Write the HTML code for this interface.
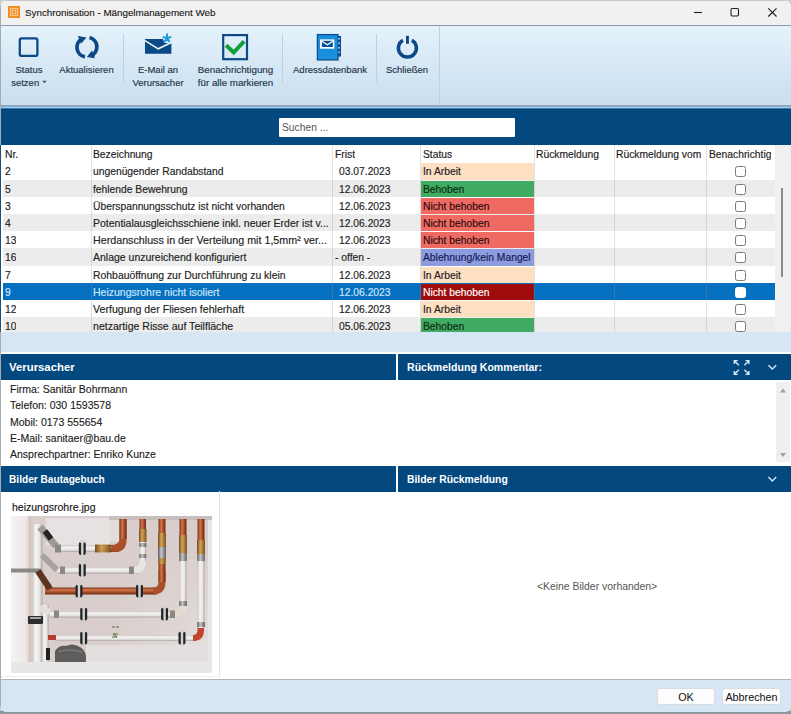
<!DOCTYPE html>
<html><head><meta charset="utf-8">
<style>
*{box-sizing:border-box;margin:0;padding:0}
html,body{width:791px;height:714px;overflow:hidden;background:#c9cbcd}
body{font-family:"Liberation Sans",sans-serif;position:relative;color:#222}
.a{position:absolute}
#win{left:0;top:0;width:791px;height:712px;background:#fff;border-radius:7px 7px 7px 7px;overflow:hidden}
#bl{left:0;top:0;width:1px;height:712px;background:#a3abb3}
#bt{left:0;top:0;width:791px;height:1px;background:#c4c6c8}
#title{left:0;top:0;width:791px;height:26px;background:#f2f1f0;border-bottom:1px solid #8c9aa8}
#title .t{left:25px;top:7px;font-size:9.8px;color:#111;-webkit-text-stroke:0.1px currentColor;white-space:nowrap}
#tb{left:0;top:26px;width:791px;height:79px;background:linear-gradient(#e4f2fb,#c9deef)}
.sep{width:1px;background:#bfd0df}
.lbl{font-size:9.5px;color:#23344a;-webkit-text-stroke:0.15px currentColor;text-align:center;white-space:nowrap;line-height:12.5px}
#band1{left:0;top:105px;width:791px;height:2px;background:#8fa7be}
#band2{left:0;top:107px;width:791px;height:3px;background:linear-gradient(#a2d2e8 0,#a2d2e8 33%,#2a84c2 33%,#2a84c2 66%,#083d6c 66%)}
#sbar{left:0;top:108px;width:791px;height:37px;background:#03487f}
#search{left:279px;top:118px;width:236px;height:19px;background:#fff;border-radius:1px}
#search span{position:absolute;left:3px;top:4px;font-size:10.3px;color:#555}
#tbl{left:0;top:145px;width:775px;height:187px;background:#fff;border-left:1px solid #0d4f86}
.row{position:absolute;left:3px;width:772px;height:17px;font-size:10.3px;white-space:nowrap;-webkit-text-stroke:0.15px currentColor}
.row.g{background:#ececec}
.row.sel{background:#0570bf;color:#cfe8ff}
.c{position:absolute;top:1px;height:17px;line-height:17px;overflow:hidden}
.vl{position:absolute;top:145px;width:1px;height:187px;background:rgba(150,150,150,0.28)}
.st{position:absolute;top:1px;height:16px;line-height:17.5px;left:418px;width:113px;padding-left:2px}
.cb{position:absolute;left:732px;top:3.5px;width:11px;height:11px;border:1.2px solid #7a7a7a;border-radius:2.5px;background:#fff}
#vscroll{left:775px;top:145px;width:16px;height:187px;background:#f0f0f0}
#thumb{left:781px;top:188px;width:2px;height:89px;background:#8a8a8a}
#band3{left:0;top:332px;width:791px;height:20px;background:#d6e6f4}
.ph{height:26px;background:#03487f;color:#fff;font-weight:bold;font-size:10.5px;line-height:26px;padding-left:9px;white-space:nowrap}
.info{left:10px;font-size:10.5px;color:#1a1a1a;white-space:nowrap;-webkit-text-stroke:0.12px currentColor}
#foot{left:0;top:679px;width:791px;height:33px;background:#d6e6f4;border-top:1px solid #b5b5b5}
.btn{position:absolute;top:688px;height:17px;background:#fdfdfd;border:1px solid #d9dde1;border-radius:3px;font-size:10.8px;text-align:center;line-height:16px;color:#111}
.st.arb{background:#fde0c2;color:#222}
.st.beh{background:#40ab62;color:#0d2a12}
.st.nb{background:#ef6a63;color:#2a0b0b}
.st.abl{background:#8e9bdf;color:#121a55}
.st.sel{background:#a00b0b;color:#fff}
.row.sel .cb{border-color:#fff}
</style></head><body>
<div class="a" style="left:0;top:711px;width:791px;height:3px;background:#8f989f"></div>
<div id="win" class="a">
  <div id="title" class="a">
    <svg class="a" style="left:8px;top:6px" width="12" height="12" viewBox="0 0 13 13"><rect x="0" y="0" width="13" height="13" fill="#f08a1c"/><rect x="2.5" y="2.5" width="8" height="8" fill="none" stroke="#ffd7a8" stroke-width="1"/><rect x="4.5" y="4.5" width="4" height="4" fill="none" stroke="#ffd7a8" stroke-width="1"/></svg>
    <div class="a t">Synchronisation - Mängelmanagement Web</div>
    <svg class="a" style="left:0;top:0" width="791" height="25" viewBox="0 0 791 25"><line x1="694" y1="12.5" x2="702" y2="12.5" stroke="#222" stroke-width="1.1"/><rect x="731" y="8.5" width="7.5" height="7.5" rx="1.2" fill="none" stroke="#222" stroke-width="1.1"/><path d="M768.3 8.3L776.5 16.5M776.5 8.3L768.3 16.5" stroke="#222" stroke-width="1.1"/></svg>
    
    
  </div>
  <div id="tb" class="a">
    <svg class="a" style="left:0;top:-1px" width="791" height="80" viewBox="0 25 791 80">
      <g fill="none" stroke="#0b4a85">
        <rect x="19.8" y="38.3" width="17.6" height="17.6" rx="2" stroke-width="2.3"/>
        <path d="M82.5 38.6 A9.7 9.7 0 0 0 84.9 56.9" stroke-width="3.8"/>
        <path d="M89.5 37.5 A9.7 9.7 0 0 1 90.8 55.9" stroke-width="3.8"/>
        <rect x="223.2" y="35.1" width="23.8" height="24.1" stroke-width="2.2"/>
        <path d="M402.9 40.2 A9 9 0 1 0 411.9 40.2" stroke-width="3.5"/>
      </g>
      <path d="M77.8 36 L86.6 37.4 L81 43.8Z" fill="#0b4a85"/>
      <path d="M86.8 57 L95 58.3 L92 50.4Z" fill="#0b4a85"/>
      <rect x="406" y="35.8" width="2.9" height="8" fill="#0b4a85"/>
      <!-- envelope -->
      <path d="M145 38.9 H163 L164.5 42.9 H171.4 V53.8 H145Z" fill="#0b4a85"/>
      <path d="M145 40.6 L158.2 48.8 L171.4 42.5" fill="none" stroke="#eef6fc" stroke-width="1.5"/>
      <g stroke="#1a9ad8" stroke-width="2" stroke-linecap="butt">
        <path d="M167 38.3 V33.6 M167 38.3 L171.3 36.9 M167 38.3 L162.7 36.9 M167 38.3 L169.7 42 M167 38.3 L164.3 42"/>
      </g>
      <path d="M226.1 45.2 L233.7 52.4 L244.1 41.4" fill="none" stroke="#13a03a" stroke-width="4" stroke-linejoin="miter"/>
      <!-- address book -->
      <rect x="317.4" y="34.6" width="20.6" height="25.3" fill="#1a8fdc" stroke="#0a4f8f" stroke-width="1.3"/>
      <rect x="338" y="36" width="3" height="20.6" fill="#0a4f8f"/>
      <g fill="#fff"><rect x="338.4" y="38" width="1.2" height="1.6"/><rect x="338.4" y="42.5" width="1.2" height="1.6"/><rect x="338.4" y="47" width="1.2" height="1.6"/><rect x="338.4" y="51.5" width="1.2" height="1.6"/></g>
      <rect x="320.1" y="39.4" width="14.2" height="9.3" fill="#fff"/>
      <rect x="321.9" y="40.8" width="10.9" height="6.2" fill="#0a4f8f"/>
      <path d="M321.9 41.2 L327.3 44.8 L332.8 41.2" fill="none" stroke="#fff" stroke-width="1.1"/>
    </svg>
    <div class="a lbl" style="left:4px;top:38px;width:50px">Status<br>setzen <svg width="5" height="4" style="vertical-align:2px"><path d="M0.3 0.8H4.7L2.5 3.3Z" fill="#3f4e60"/></svg></div>
    <div class="a lbl" style="left:56px;top:38px;width:61px">Aktualisieren</div>
    <div class="a sep" style="left:123px;top:8px;height:49px"></div>
    <div class="a lbl" style="left:128px;top:38px;width:60px">E-Mail an<br>Verursacher</div>
    <div class="a lbl" style="left:190px;top:38px;width:91px;font-size:9.75px">Benachrichtigung<br>für alle markieren</div>
    <div class="a sep" style="left:282px;top:8px;height:49px"></div>
    <div class="a lbl" style="left:290px;top:38px;width:80px">Adressdatenbank</div>
    <div class="a sep" style="left:376px;top:8px;height:49px"></div>
    <div class="a lbl" style="left:382px;top:38px;width:50px">Schließen</div>
    <div class="a sep" style="left:439px;top:0px;height:79px"></div>
  </div>
  <div id="band1" class="a"></div>
  <div id="sbar" class="a"></div>
  <div id="band2" class="a"></div>
  <div id="search" class="a"><span>Suchen ...</span></div>

  <div id="tbl" class="a"></div>
  <div id="rows">
<div class="row" style="top:145px;height:17px"><div class="c" style="left:2px">Nr.</div><div class="c" style="left:90px">Bezeichnung</div><div class="c" style="left:332px">Frist</div><div class="c" style="left:420px">Status</div><div class="c" style="left:533px">Rückmeldung</div><div class="c" style="left:613px">Rückmeldung vom</div><div class="c" style="left:706px">Benachrichtig</div></div>
<div class="row" style="top:162px;height:18px"><div class="c" style="left:2px">2</div><div class="c" style="left:90px;width:238px">ungenügender Randabstand</div><div class="c" style="left:336px">03.07.2023</div><div class="st arb" style="height:17px">In Arbeit</div><div class="cb"></div></div>
<div class="row g" style="top:180px;height:17px"><div class="c" style="left:2px">5</div><div class="c" style="left:90px;width:238px">fehlende Bewehrung</div><div class="c" style="left:336px">12.06.2023</div><div class="st beh" style="height:16px">Behoben</div><div class="cb"></div></div>
<div class="row" style="top:197px;height:17px"><div class="c" style="left:2px">3</div><div class="c" style="left:90px;width:238px">Überspannungsschutz ist nicht vorhanden</div><div class="c" style="left:336px">12.06.2023</div><div class="st nb" style="height:16px">Nicht behoben</div><div class="cb"></div></div>
<div class="row g" style="top:214px;height:17px"><div class="c" style="left:2px">4</div><div class="c" style="left:90px;width:245px"><span style="display:inline-block;transform:scaleX(1.0177);transform-origin:0 50%">Potentialausgleichsschiene inkl. neuer Erder ist v...</span></div><div class="c" style="left:336px">12.06.2023</div><div class="st nb" style="height:16px">Nicht behoben</div><div class="cb"></div></div>
<div class="row" style="top:231px;height:17px"><div class="c" style="left:2px">13</div><div class="c" style="left:90px;width:245px"><span style="display:inline-block;transform:scaleX(1.04);transform-origin:0 50%">Herdanschluss in der Verteilung mit 1,5mm² ver...</span></div><div class="c" style="left:336px">12.06.2023</div><div class="st nb" style="height:16px">Nicht behoben</div><div class="cb"></div></div>
<div class="row g" style="top:248px;height:18px"><div class="c" style="left:2px">16</div><div class="c" style="left:90px;width:245px"><span style="display:inline-block;transform:scaleX(1.0186);transform-origin:0 50%">Anlage unzureichend konfiguriert</span></div><div class="c" style="left:332px">- offen -</div><div class="st abl" style="height:17px">Ablehnung/kein Mangel</div><div class="cb"></div></div>
<div class="row" style="top:266px;height:17px"><div class="c" style="left:2px">7</div><div class="c" style="left:90px;width:245px"><span style="display:inline-block;transform:scaleX(1.011);transform-origin:0 50%">Rohbauöffnung zur Durchführung zu klein</span></div><div class="c" style="left:336px">12.06.2023</div><div class="st arb" style="height:16px">In Arbeit</div><div class="cb"></div></div>
<div class="row sel" style="top:283px;height:17px"><div class="c" style="left:2px">9</div><div class="c" style="left:90px;width:245px"><span style="display:inline-block;transform:scaleX(1.0185);transform-origin:0 50%">Heizungsrohre nicht isoliert</span></div><div class="c" style="left:336px">12.06.2023</div><div class="st sel" style="height:16px">Nicht behoben</div><div class="cb"></div></div>
<div class="row" style="top:300px;height:17px"><div class="c" style="left:2px">12</div><div class="c" style="left:90px;width:245px"><span style="display:inline-block;transform:scaleX(1.031);transform-origin:0 50%">Verfugung der Fliesen fehlerhaft</span></div><div class="c" style="left:336px">12.06.2023</div><div class="st arb" style="height:16px">In Arbeit</div><div class="cb"></div></div>
<div class="row g" style="top:317px;height:15px"><div class="c" style="left:2px">10</div><div class="c" style="left:90px;width:245px"><span style="display:inline-block;transform:scaleX(1.026);transform-origin:0 50%">netzartige Risse auf Teilfläche</span></div><div class="c" style="left:336px">05.06.2023</div><div class="st beh" style="height:14px">Behoben</div><div class="cb"></div></div>
</div><!--/rows-->
  <div class="vl" style="left:91px"></div>
  <div class="vl" style="left:332px"></div>
  <div class="vl" style="left:420px"></div>
  <div class="vl" style="left:534px"></div>
  <div class="vl" style="left:614px"></div>
  <div class="vl" style="left:706px"></div>

  <div id="vscroll" class="a"></div>
  <div id="thumb" class="a"></div>
  <div id="band3" class="a"></div>
  <div class="a" style="left:0;top:352px;width:791px;height:2px;background:#fff"></div>

  <div class="a ph" style="left:0;top:354px;width:396px"><span style="display:inline-block;transform:scaleX(1.082);transform-origin:0 50%">Verursacher</span></div>
  <div class="a ph" style="left:398px;top:354px;width:393px"><span style="display:inline-block;transform:scaleX(1.006);transform-origin:0 50%">Rückmeldung Kommentar:</span></div>
  <div class="a info" style="top:383px">Firma: Sanitär Bohrmann</div>
  <div class="a info" style="top:399px">Telefon: 030 1593578</div>
  <div class="a info" style="top:416px">Mobil: 0173 555654</div>
  <div class="a info" style="top:432px">E-Mail: sanitaer@bau.de</div>
  <div class="a info" style="top:448px">Ansprechpartner: Enriko Kunze</div>

  <div class="a ph" style="left:0;top:466px;width:396px"><span style="display:inline-block;transform:scaleX(0.965);transform-origin:0 50%">Bilder Bautagebuch</span></div>
  <div class="a ph" style="left:398px;top:466px;width:393px"><span style="display:inline-block;transform:scaleX(0.987);transform-origin:0 50%">Bilder Rückmeldung</span></div>
  <div class="a" style="left:219px;top:491px;width:1px;height:186px;background:#e3e3e3"></div>
  <div class="a" style="left:0;top:676px;width:220px;height:1px;background:#ededed"></div>
  <div class="a" style="left:12px;top:501px;font-size:10.5px;color:#111;white-space:nowrap;-webkit-text-stroke:0.12px currentColor">heizungsrohre.jpg</div>
  <svg class="a" style="left:8px;top:512px" width="210" height="166" viewBox="8 512 210 166">
    <defs>
      <linearGradient id="hw" x1="0" y1="0" x2="0" y2="1"><stop offset="0" stop-color="#c9c5c3"/><stop offset="0.3" stop-color="#f4f3f2"/><stop offset="0.7" stop-color="#e6e4e3"/><stop offset="1" stop-color="#a9a4a1"/></linearGradient>
      <linearGradient id="vw" x1="0" y1="0" x2="1" y2="0"><stop offset="0" stop-color="#c9c5c3"/><stop offset="0.35" stop-color="#f6f5f4"/><stop offset="0.75" stop-color="#e4e2e1"/><stop offset="1" stop-color="#a9a4a1"/></linearGradient>
      <linearGradient id="hc" x1="0" y1="0" x2="0" y2="1"><stop offset="0" stop-color="#7a3219"/><stop offset="0.35" stop-color="#d3774a"/><stop offset="0.65" stop-color="#a9502a"/><stop offset="1" stop-color="#6a2a14"/></linearGradient>
      <linearGradient id="vc" x1="0" y1="0" x2="1" y2="0"><stop offset="0" stop-color="#7a3219"/><stop offset="0.4" stop-color="#d3774a"/><stop offset="0.65" stop-color="#a9502a"/><stop offset="1" stop-color="#6a2a14"/></linearGradient>
      <linearGradient id="vb" x1="0" y1="0" x2="1" y2="0"><stop offset="0" stop-color="#6e4a1c"/><stop offset="0.4" stop-color="#d4a45a"/><stop offset="1" stop-color="#7a5220"/></linearGradient>
      <linearGradient id="vm" x1="0" y1="0" x2="1" y2="0"><stop offset="0" stop-color="#5a5a5a"/><stop offset="0.4" stop-color="#c8c8c8"/><stop offset="1" stop-color="#5e5e5e"/></linearGradient>
      <linearGradient id="wg" x1="0" y1="0" x2="1" y2="1"><stop offset="0" stop-color="#dacfcc" stop-opacity="0"/><stop offset="1" stop-color="#e6e2e1"/></linearGradient>
      <linearGradient id="wl" x1="0" y1="0" x2="1" y2="0"><stop offset="0" stop-color="#f4f2f2"/><stop offset="0.75" stop-color="#ede8e7"/><stop offset="1" stop-color="#cdbbb4"/></linearGradient>
    </defs>
    <rect x="11" y="662" width="201" height="11" fill="#e7e7e7"/>
    <rect x="11" y="516" width="201" height="146" fill="#d9cecb"/>
    <rect x="11" y="516" width="20" height="146" fill="url(#wl)"/>
    <rect x="46" y="518" width="64" height="27" fill="#e7e2e1"/>
    <rect x="110" y="520" width="10" height="22" fill="#e2dcdb"/>
    <rect x="120" y="560" width="92" height="102" fill="url(#wg)"/>
    <rect x="86" y="645" width="126" height="17" fill="#e3dfde"/>
    <rect x="109" y="516" width="103" height="4" fill="#c6bfbc"/>
    <rect x="208" y="520" width="4" height="142" fill="#e9e6e5"/>
    <!-- horizontal pipes -->
    <rect x="55" y="545" width="41" height="7" fill="url(#hw)"/>
    <rect x="95" y="545" width="24" height="7" fill="url(#hc)"/>
    <rect x="95" y="544.5" width="16" height="8" fill="url(#vb)" opacity="0.9"/>
    <rect x="58" y="567" width="80" height="6.5" fill="url(#hw)"/>
    <rect x="45" y="587.5" width="112" height="7" fill="url(#hc)"/>
    <rect x="50" y="611" width="128" height="6.5" fill="url(#hw)"/>
    <rect x="55" y="635" width="141" height="6" fill="url(#hw)"/>
    <!-- elbows -->
    <path d="M119.5 545 H119 Q126.5 545 126.5 537 V540 Q126.5 552 115 552" fill="#a9502a"/>
    <path d="M112 552 Q126.5 552 126.5 538 V519 H119.5 V538 Q119.5 545 112 545Z" fill="#a9502a"/>
    <path d="M134 573.5 Q146 573.5 146 561 V556 H139.5 V561 Q139.5 567 134 567Z" fill="#e9e6e3"/>
    <path d="M153 594.5 Q165.5 594.5 165.5 582 V570 H158.5 V582 Q158.5 587.5 153 587.5Z" fill="#a9502a"/>
    <path d="M175 617.5 Q186.5 617.5 186.5 606 V600 H179.5 V606 Q179.5 611 175 611Z" fill="#e2ddd2"/>
    <path d="M193 641 Q204 641 204 630 V626 H197.5 V630 Q197.5 635 193 635Z" fill="#c2442f"/>
    <!-- vertical pipes -->
    <rect x="119.5" y="519" width="7" height="20" fill="url(#vc)"/>
    <rect x="139.5" y="519" width="6.5" height="12" fill="url(#vc)"/>
    <rect x="139" y="529" width="7.5" height="13" fill="url(#vb)"/>
    <rect x="139.5" y="542" width="6.5" height="19" fill="url(#vw)"/>
    <rect x="139.3" y="543" width="7" height="4" fill="url(#vm)"/>
    <rect x="139.3" y="554" width="7" height="4" fill="url(#vm)"/>
    <rect x="158.5" y="519" width="7" height="14" fill="url(#vc)"/>
    <rect x="158" y="533" width="8" height="14" fill="url(#vb)"/>
    <rect x="158" y="547" width="8" height="11" fill="url(#vm)"/>
    <rect x="158.3" y="558" width="7.5" height="6" fill="url(#vb)"/>
    <rect x="158.5" y="564" width="7" height="18" fill="url(#vc)"/>
    <rect x="179.5" y="519" width="7" height="17" fill="url(#vc)"/>
    <rect x="179" y="535" width="8" height="18" fill="url(#vb)"/>
    <rect x="179.3" y="553" width="7.5" height="8" fill="url(#vm)"/>
    <rect x="179.5" y="561" width="7" height="45" fill="url(#vw)"/>
    <rect x="179.3" y="601" width="7.5" height="5" fill="url(#vm)"/>
    <rect x="197.5" y="519" width="7" height="21" fill="url(#vc)"/>
    <rect x="197" y="540" width="8" height="14" fill="url(#vb)"/>
    <rect x="197.3" y="554" width="7.5" height="7" fill="url(#vm)"/>
    <rect x="197.5" y="561" width="7" height="67" fill="url(#vw)"/>
    <rect x="197.3" y="622" width="7.5" height="5" fill="url(#vm)"/>
    <!-- left pipes -->
    <rect x="32" y="524" width="10.5" height="138" fill="url(#vw)"/>
    <rect x="42" y="605" width="6.5" height="57" fill="url(#vw)"/>
    <g fill="none" stroke-linecap="butt">
      <path d="M40 527 L56 546" stroke="#9d9a97" stroke-width="7"/>
      <path d="M45 531 L51 539" stroke="#222" stroke-width="5.5"/>
      <path d="M42 555 L57 570" stroke="#a6a29f" stroke-width="6"/>
      <path d="M11 570.5 H41" stroke="#8c8886" stroke-width="4"/>
      <path d="M38 571 L50 589" stroke="#5e3420" stroke-width="6.5"/>
      <path d="M40 608 L50 612" stroke="#e2deda" stroke-width="6"/>
      <path d="M48 637.5 L56 637.5" stroke="#b83a2e" stroke-width="5"/>
    </g>
    <rect x="55" y="544.5" width="6" height="8" fill="#8a8784"/>
    <rect x="60" y="566.5" width="5" height="7.5" fill="#8a8784"/>
    <rect x="54" y="610.5" width="5" height="7.5" fill="#8a8784"/>
    <rect x="129" y="566.5" width="5" height="7.5" fill="#8a8784"/>
    <rect x="170" y="610.5" width="5" height="7.5" fill="#8a8784"/>
    <path d="M55 662 V651 Q59 645 66 646 Q72 643 78 646 Q85 649 86 656 V662Z" fill="#5f5d5c"/>
    <path d="M58 652 Q68 648 82 652" stroke="#858382" stroke-width="1.2" fill="none"/>
    <rect x="28" y="616" width="15" height="8" rx="1" fill="#2d2d2d"/>
    <rect x="30" y="617" width="11" height="2" fill="#a5a5a5"/>
    <rect x="46" y="648" width="4" height="12" fill="#222"/>
    <!-- clamps -->
    <g fill="#262626"><rect x="78.8" y="542.0" width="7" height="13" rx="2"/><rect x="78.8" y="563.5" width="7" height="13" rx="2"/><rect x="75.5" y="584.5" width="7" height="13" rx="2"/><rect x="136.0" y="584.5" width="7" height="13" rx="2"/><rect x="80.2" y="607.5" width="7" height="13" rx="2"/><rect x="161.1" y="607.5" width="7" height="13" rx="2"/><rect x="80.2" y="631.5" width="7" height="13" rx="2"/><rect x="178.5" y="631.5" width="7" height="13" rx="2"/></g>
    <g fill="#d0d3d4"><rect x="81.1" y="540.5" width="2.4" height="16" rx="1"/><rect x="79.8" y="540.0" width="5" height="3" rx="1.5"/><rect x="81.1" y="562.0" width="2.4" height="16" rx="1"/><rect x="79.8" y="561.5" width="5" height="3" rx="1.5"/><rect x="77.8" y="583.0" width="2.4" height="16" rx="1"/><rect x="76.5" y="582.5" width="5" height="3" rx="1.5"/><rect x="138.3" y="583.0" width="2.4" height="16" rx="1"/><rect x="137.0" y="582.5" width="5" height="3" rx="1.5"/><rect x="82.5" y="606.0" width="2.4" height="16" rx="1"/><rect x="81.2" y="605.5" width="5" height="3" rx="1.5"/><rect x="163.4" y="606.0" width="2.4" height="16" rx="1"/><rect x="162.1" y="605.5" width="5" height="3" rx="1.5"/><rect x="82.5" y="630.0" width="2.4" height="16" rx="1"/><rect x="81.2" y="629.5" width="5" height="3" rx="1.5"/><rect x="180.8" y="630.0" width="2.4" height="16" rx="1"/><rect x="179.5" y="629.5" width="5" height="3" rx="1.5"/></g>
    <path d="M112 627 h3 M116 627 h3 M118 634 h-5 l4 3 h-5" stroke="#4a6a3a" stroke-width="1" fill="none"/>
  </svg>
  <div class="a" style="left:537px;top:581px;font-size:10.4px;color:#555;white-space:nowrap">&lt;Keine Bilder vorhanden&gt;</div>

  <svg class="a" style="left:0;top:0" width="791" height="714" viewBox="0 0 791 714">
    <g fill="none" stroke="#d5eaf8" stroke-width="1.4">
      <path d="M734.6 361 L738.8 365.2 M734.3 364 V360.6 H737.7"/>
      <path d="M748.6 361 L744.4 365.2 M748.9 364 V360.6 H745.5"/>
      <path d="M734.6 374 L738.8 369.8 M734.3 371 V374.4 H737.7"/>
      <path d="M748.6 374 L744.4 369.8 M748.9 371 V374.4 H745.5"/>
      <path d="M768.4 365.2 L772.3 369.1 L776.2 365.2"/>
      <path d="M768.4 477 L772.3 480.9 L776.2 477"/>
    </g>
    <rect x="776" y="382" width="14" height="80" fill="#efefef"/>
    <path d="M780 392.5 L783 388.5 L786 392.5Z" fill="#a0a0a0"/>
    <path d="M780 453 L783 457 L786 453Z" fill="#a0a0a0"/>
  </svg>
  <div id="foot" class="a"></div>
  <div class="btn" style="left:657px;width:58px">OK</div>
  <div class="btn" style="left:722px;width:59px">Abbrechen</div>
<div id="bl" class="a"></div><div class="a" style="left:0;top:145px;width:1px;height:187px;background:#1d4f78"></div><div id="bt" class="a"></div>
</div>
</body></html>
